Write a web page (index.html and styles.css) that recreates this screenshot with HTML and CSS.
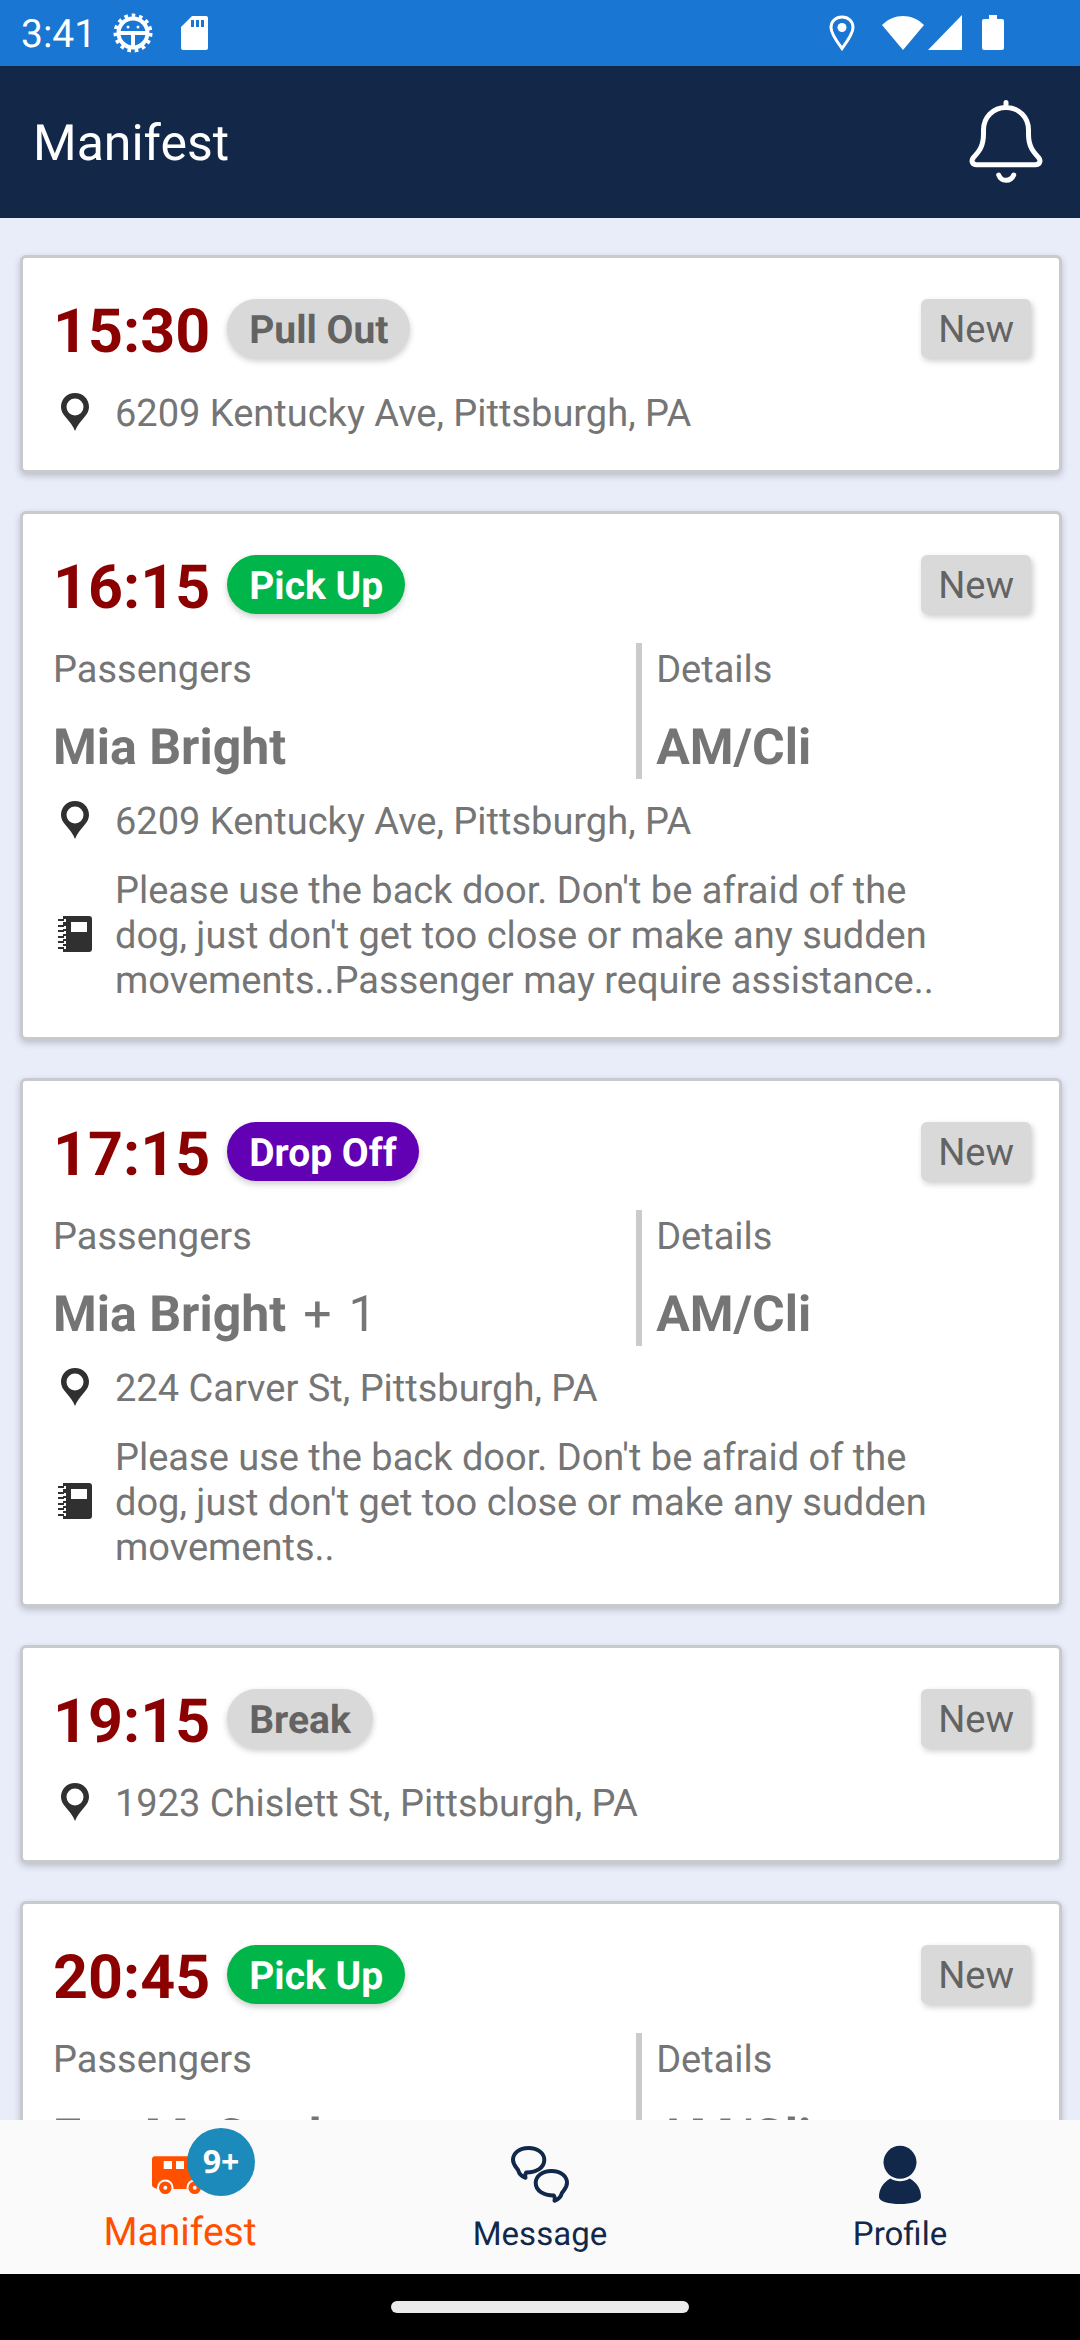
FILE: index.html
```html
<!DOCTYPE html>
<html lang="en">

<head>
     <meta charset="UTF-8">
     <meta name="viewport" content="width=device-width, initial-scale=1.0">
     <title>Manifest</title>
     <link rel="stylesheet" href="styles.css">
</head>

<body>
     <!-- shared icons -->
     <svg class="sprite" aria-hidden="true">
          <symbol id="pin" viewBox="0 0 36 40">
               <path fill-rule="evenodd" d="M18 1C10 1 4 7 4 15c0 4 2 7 4.500 10 4 4.500 7.500 9 9.500 14 2-5 5.500-9.500 9.500-14C30 22 32 19 32 15 32 7 26 1 18 1zm0 5.500a8.500 8.500 0 1 1 0 17 8.500 8.500 0 0 1 0-17z"/>
          </symbol>
          <symbol id="notebook" viewBox="0 0 36 40">
               <path fill-rule="evenodd" d="M6 2h26q3 0 3 3v30q0 3-3 3H6v-3h3v-3H6v-2h3v-3H6v-2h3v-3H6v-2h3v-3H6v-2h3v-3H6V8h3V5H6zM14 8v10h16V8z"/>
               <path d="M1 5h6v2H1zM1 11h6v2H1zM1 16h6v2H1zM1 22h6v2H1zM1 27h6v2H1zM1 33h6v2H1z"/>
          </symbol>
     </svg>

     <div class="app">
          <div class="statusBar">
               <span class="clock">3:41</span>
               <svg class="gear" width="40" height="40" viewBox="0 0 40 40">
                    <circle cx="20" cy="20" r="14.500" fill="none" stroke="#fff" stroke-width="4"/>
                    <circle cx="20" cy="20" r="17.500" fill="none" stroke="#fff" stroke-width="4" stroke-dasharray="3.600 3.730"/>
                    <path d="M6 20h28M20 20v15" fill="none" stroke="#fff" stroke-width="4"/>
                    <circle cx="15" cy="14" r="1.500" fill="#fff"/>
                    <circle cx="25" cy="14" r="1.500" fill="#fff"/>
               </svg>
               <svg class="sd" width="28" height="36" viewBox="0 0 28 36">
                    <path fill="#fff" fill-rule="evenodd" d="M11 1h14q2 0 2 2v30q0 2-2 2H2q-2 0-2-2V12zM10 5v7h3V5zM15 5v7h3V5zM20 5v7h3V5z"/>
               </svg>
               <div class="system">
                    <svg width="26" height="36" viewBox="0 0 26 36">
                         <path d="M13 2C6.500 2 2 6.500 2 12.500 2 19 9 28 13 33.500 17 28 24 19 24 12.500 24 6.500 19.500 2 13 2z" fill="none" stroke="#fff" stroke-width="3"/>
                         <circle cx="13" cy="12.500" r="4.500" fill="#fff"/>
                    </svg>
                    <svg class="wifi" width="42" height="36" viewBox="0 0 42 36">
                         <path fill="#fff" d="M0 10C12-2 30-2 42 10L21 35z"/>
                    </svg>
                    <svg class="signal" width="34" height="36" viewBox="0 0 34 36">
                         <path fill="#fff" d="M34 0v35H0z"/>
                    </svg>
                    <svg class="battery" width="22" height="36" viewBox="0 0 22 36">
                         <path fill="#fff" d="M7 0h8v4h5q2 0 2 2v27q0 2-2 2H2q-2 0-2-2V6q0-2 2-2h5z"/>
                    </svg>
               </div>
          </div>

          <header class="header">
               <h1>Manifest</h1>
               <button class="bell" aria-label="Notifications">
                    <svg width="76" height="88" viewBox="0 0 76 88" fill="none" stroke="#fff" stroke-width="5" stroke-linecap="round">
                         <path d="M38 9.500C25 9.500 15.500 19.500 15.500 32v4c0 13-5 18-10 23.500-3 3.500-1 7.200 3 7.200h59c4 0 6-3.700 3-7.200C65.500 54 60.500 49 60.500 36v-4C60.500 19.500 51 9.500 38 9.500zM38 4.500V9"/>
                         <path d="M30.700 77c1.300 3.500 4.300 5.300 7.300 5.300s6.200-1.800 7.700-5.300"/>
                    </svg>
               </button>
          </header>

          <main class="list">
               <div class="card">
                    <div class="top">
                         <span class="time">15:30</span>
                         <span class="type">Pull Out</span>
                         <span class="status">New</span>
                    </div>
                    <div class="row">
                         <svg class="icon"><use href="#pin"/></svg>
                         <p>6209 Kentucky Ave, Pittsburgh, PA</p>
                    </div>
               </div>

               <div class="card">
                    <div class="top">
                         <span class="time">16:15</span>
                         <span class="type pickup">Pick Up</span>
                         <span class="status">New</span>
                    </div>
                    <div class="info">
                         <div class="passengers">
                              <p>Passengers</p>
                              <p class="value"><b>Mia Bright</b></p>
                         </div>
                         <div class="details">
                              <p>Details</p>
                              <p class="value"><b>AM/Cli</b></p>
                         </div>
                    </div>
                    <div class="row">
                         <svg class="icon"><use href="#pin"/></svg>
                         <p>6209 Kentucky Ave, Pittsburgh, PA</p>
                    </div>
                    <div class="row note">
                         <svg class="icon"><use href="#notebook"/></svg>
                         <p>Please use the back door. Don't be afraid of the dog, just don't get too close or make any sudden movements..Passenger may require assistance..</p>
                    </div>
               </div>

               <div class="card">
                    <div class="top">
                         <span class="time">17:15</span>
                         <span class="type dropoff">Drop Off</span>
                         <span class="status">New</span>
                    </div>
                    <div class="info">
                         <div class="passengers">
                              <p>Passengers</p>
                              <p class="value"><b>Mia Bright</b><span class="extra">+</span><span class="extra">1</span></p>
                         </div>
                         <div class="details">
                              <p>Details</p>
                              <p class="value"><b>AM/Cli</b></p>
                         </div>
                    </div>
                    <div class="row">
                         <svg class="icon"><use href="#pin"/></svg>
                         <p>224 Carver St, Pittsburgh, PA</p>
                    </div>
                    <div class="row note">
                         <svg class="icon"><use href="#notebook"/></svg>
                         <p>Please use the back door. Don't be afraid of the dog, just don't get too close or make any sudden movements..</p>
                    </div>
               </div>

               <div class="card">
                    <div class="top">
                         <span class="time">19:15</span>
                         <span class="type">Break</span>
                         <span class="status">New</span>
                    </div>
                    <div class="row">
                         <svg class="icon"><use href="#pin"/></svg>
                         <p>1923 Chislett St, Pittsburgh, PA</p>
                    </div>
               </div>

               <div class="card">
                    <div class="top">
                         <span class="time">20:45</span>
                         <span class="type pickup">Pick Up</span>
                         <span class="status">New</span>
                    </div>
                    <div class="info">
                         <div class="passengers">
                              <p>Passengers</p>
                              <p class="value"><b>Eva McCord</b></p>
                         </div>
                         <div class="details">
                              <p>Details</p>
                              <p class="value"><b>AM/Cli</b></p>
                         </div>
                    </div>
               </div>
          </main>

          <nav class="tabs">
               <a href="#" class="tab active">
                    <span class="tabIcon">
                         <svg width="62" height="62" viewBox="0 0 62 62">
                              <path fill="#ff5000" fill-rule="evenodd" d="M6 12.300h48q5 0 5 5V41q0 4-4 4H10q-7-1-7-4V15.300q0-3 3-3zM14.700 17v8H23v-8zM27 17v8h8v-8z"/>
                              <g fill="#ff5000" stroke="#fafafa" stroke-width="2">
                                   <circle cx="16.300" cy="43.700" r="7.300"/>
                                   <circle cx="45.700" cy="43.700" r="7.300"/>
                              </g>
                              <circle cx="16.300" cy="43.700" r="2" fill="#fafafa"/>
                              <circle cx="45.700" cy="43.700" r="2" fill="#fafafa"/>
                         </svg>
                         <span class="badge">9+</span>
                    </span>
                    <span class="label">Manifest</span>
               </a>
               <a href="#" class="tab">
                    <span class="tabIcon">
                         <svg width="62" height="62" viewBox="0 0 62 62" fill="none" stroke="#12284a" stroke-width="4" stroke-linejoin="round">
                              <path id="bubble" d="M19.500 4C10 4 4 9.300 4 15.800c0 5 3 7 5 10 .8 3 2.500 6.500 7.500 8-.8-1.800-.3-3.500.7-5.300C27.500 28.200 35.300 24 35.300 15.800 35.300 9.300 29 4 19.500 4z"/>
                              <use href="#bubble" transform="translate(62 23) scale(-1 1)"/>
                         </svg>
                    </span>
                    <span class="label">Message</span>
               </a>
               <a href="#" class="tab">
                    <span class="tabIcon">
                         <svg width="62" height="62" viewBox="0 0 62 62" fill="#12284a">
                              <circle cx="31" cy="18.300" r="16.500"/>
                              <path d="M21.500 34.500c5.500 3.500 13.500 3.500 19 0C48 38.500 52 45 52 53c0 4.500-10 7-21 7s-21-2.500-21-7c0-8 4-14.500 11.500-18.500z"/>
                         </svg>
                    </span>
                    <span class="label">Profile</span>
               </a>
          </nav>
          <div class="gestureBar"><span></span></div>
     </div>
</body>

</html>
```

FILE: styles.css
```css
* {
     margin: 0px;
     padding: 0px;
     box-sizing: border-box;
}

body {
     font-family: Roboto, "Liberation Sans", sans-serif;
     font-size: 38px;
     line-height: 45px;
     color: #757575;
     background-color: #e9edfa;
     text-rendering: geometricPrecision;
}

.sprite {
     display: none;
}

.app {
     display: flex;
     flex-direction: column;
     width: 100%;
     height: 100vh;
}

.statusBar {
     display: flex;
     flex: none;
     align-items: center;
     height: 66px;
     padding: 0px 76px 0px 21px;
     background-color: #1976d2;
     color: #fff;
}

.clock {
     padding-top: 3px;
     font-size: 39px;
}

.gear {
     margin-left: 17px;
}

.sd {
     margin-left: 28px;
}

.system {
     display: flex;
     margin-left: auto;
}

.wifi {
     margin-left: 27px;
}

.signal {
     margin-left: 4px;
}

.battery {
     margin-left: 20px;
}

.header {
     display: flex;
     flex: none;
     align-items: center;
     justify-content: space-between;
     height: 152px;
     padding: 0px 36px 0px 33px;
     background-color: #132849;
     color: #fff;

     h1 {
          padding-top: 5px;
          font-size: 50px;
          font-weight: 400;
     }
}

.bell {
     display: flex;
     border: none;
     background: none;
}

.list {
     display: flex;
     flex: 1;
     flex-direction: column;
     gap: 38px;
     min-height: 0px;
     padding: 37px 18px 38px 20px;
     overflow-y: scroll;
     scrollbar-width: none;
}

.card {
     flex: none;
     padding: 41px 28px 33px 30px;
     border: 3px solid #c9cacd;
     border-radius: 6px;
     background-color: #fff;
     box-shadow: 0px 3px 7px rgba(0, 0, 0, 0.2);
}

.top {
     display: flex;
     align-items: center;
     height: 59px;
}

.time {
     padding-top: 5px;
     font-size: 61px;
     font-weight: 700;
     color: #8b0000;
}

.type {
     margin-left: 17px;
     padding: 9px 22px 5px;
     border-radius: 30px;
     background-color: #d9d9d9;
     color: #636363;
     font-size: 39px;
     font-weight: 700;
     box-shadow: 0px 3px 6px rgba(0, 0, 0, 0.2);
}

.type.pickup {
     background-color: #00b549;
     color: #fff;
}

.type.dropoff {
     background-color: #6200b3;
     color: #fff;
}

.status {
     margin-left: auto;
     padding: 9px 17px 5px;
     border-radius: 6px;
     background-color: #d9d9d9;
     color: #636363;
     box-shadow: 2px 3px 6px rgba(0, 0, 0, 0.2);
}

.info {
     display: flex;
     height: 136px;
     margin-top: 29px;
     margin-bottom: -13px;
}

.passengers,
.details {
     display: flex;
     flex-direction: column;
     gap: 26px;
     padding-top: 5px;
}

.passengers {
     flex: 14;
}

.details {
     flex: 9;
     padding-left: 14px;
     border-left: 6px solid #cbcbcb;
}

.value {
     font-size: 50px;
     line-height: 58px;
}

.extra {
     margin-left: 17px;
}

.row {
     display: flex;
     align-items: center;
     margin-top: 34px;
}

.row.note {
     margin-top: 24px;
     padding-right: 80px;
}

.icon {
     flex: none;
     width: 36px;
     height: 40px;
     margin: 0px 22px 5px 4px;
     fill: #303030;
}

.tabs {
     display: flex;
     flex: none;
     height: 154px;
     background-color: #fafafa;
}

.tab {
     display: flex;
     flex: 1;
     flex-direction: column;
     align-items: center;
     justify-content: space-between;
     padding: 24px 0px 17px;
     color: #12284a;
     font-size: 33px;
     text-decoration: none;
}

.tab.active {
     padding-bottom: 19px;
     color: #ff5000;
     font-size: 39px;
}

.tabIcon {
     position: relative;
     display: flex;
}

/* count sits over the bus icon */
.badge {
     position: absolute;
     top: -16px;
     left: 38px;
     width: 68px;
     height: 68px;
     border-radius: 50%;
     background-color: #1c8aba;
     color: #fff;
     font-family: "Noto Sans", sans-serif;
     font-size: 32px;
     font-weight: 700;
     line-height: 68px;
     text-align: center;
}

.gestureBar {
     display: flex;
     flex: none;
     align-items: center;
     justify-content: center;
     height: 66px;
     background-color: #000;

     span {
          width: 298px;
          height: 12px;
          border-radius: 6px;
          background-color: #ebebeb;
     }
}
```
